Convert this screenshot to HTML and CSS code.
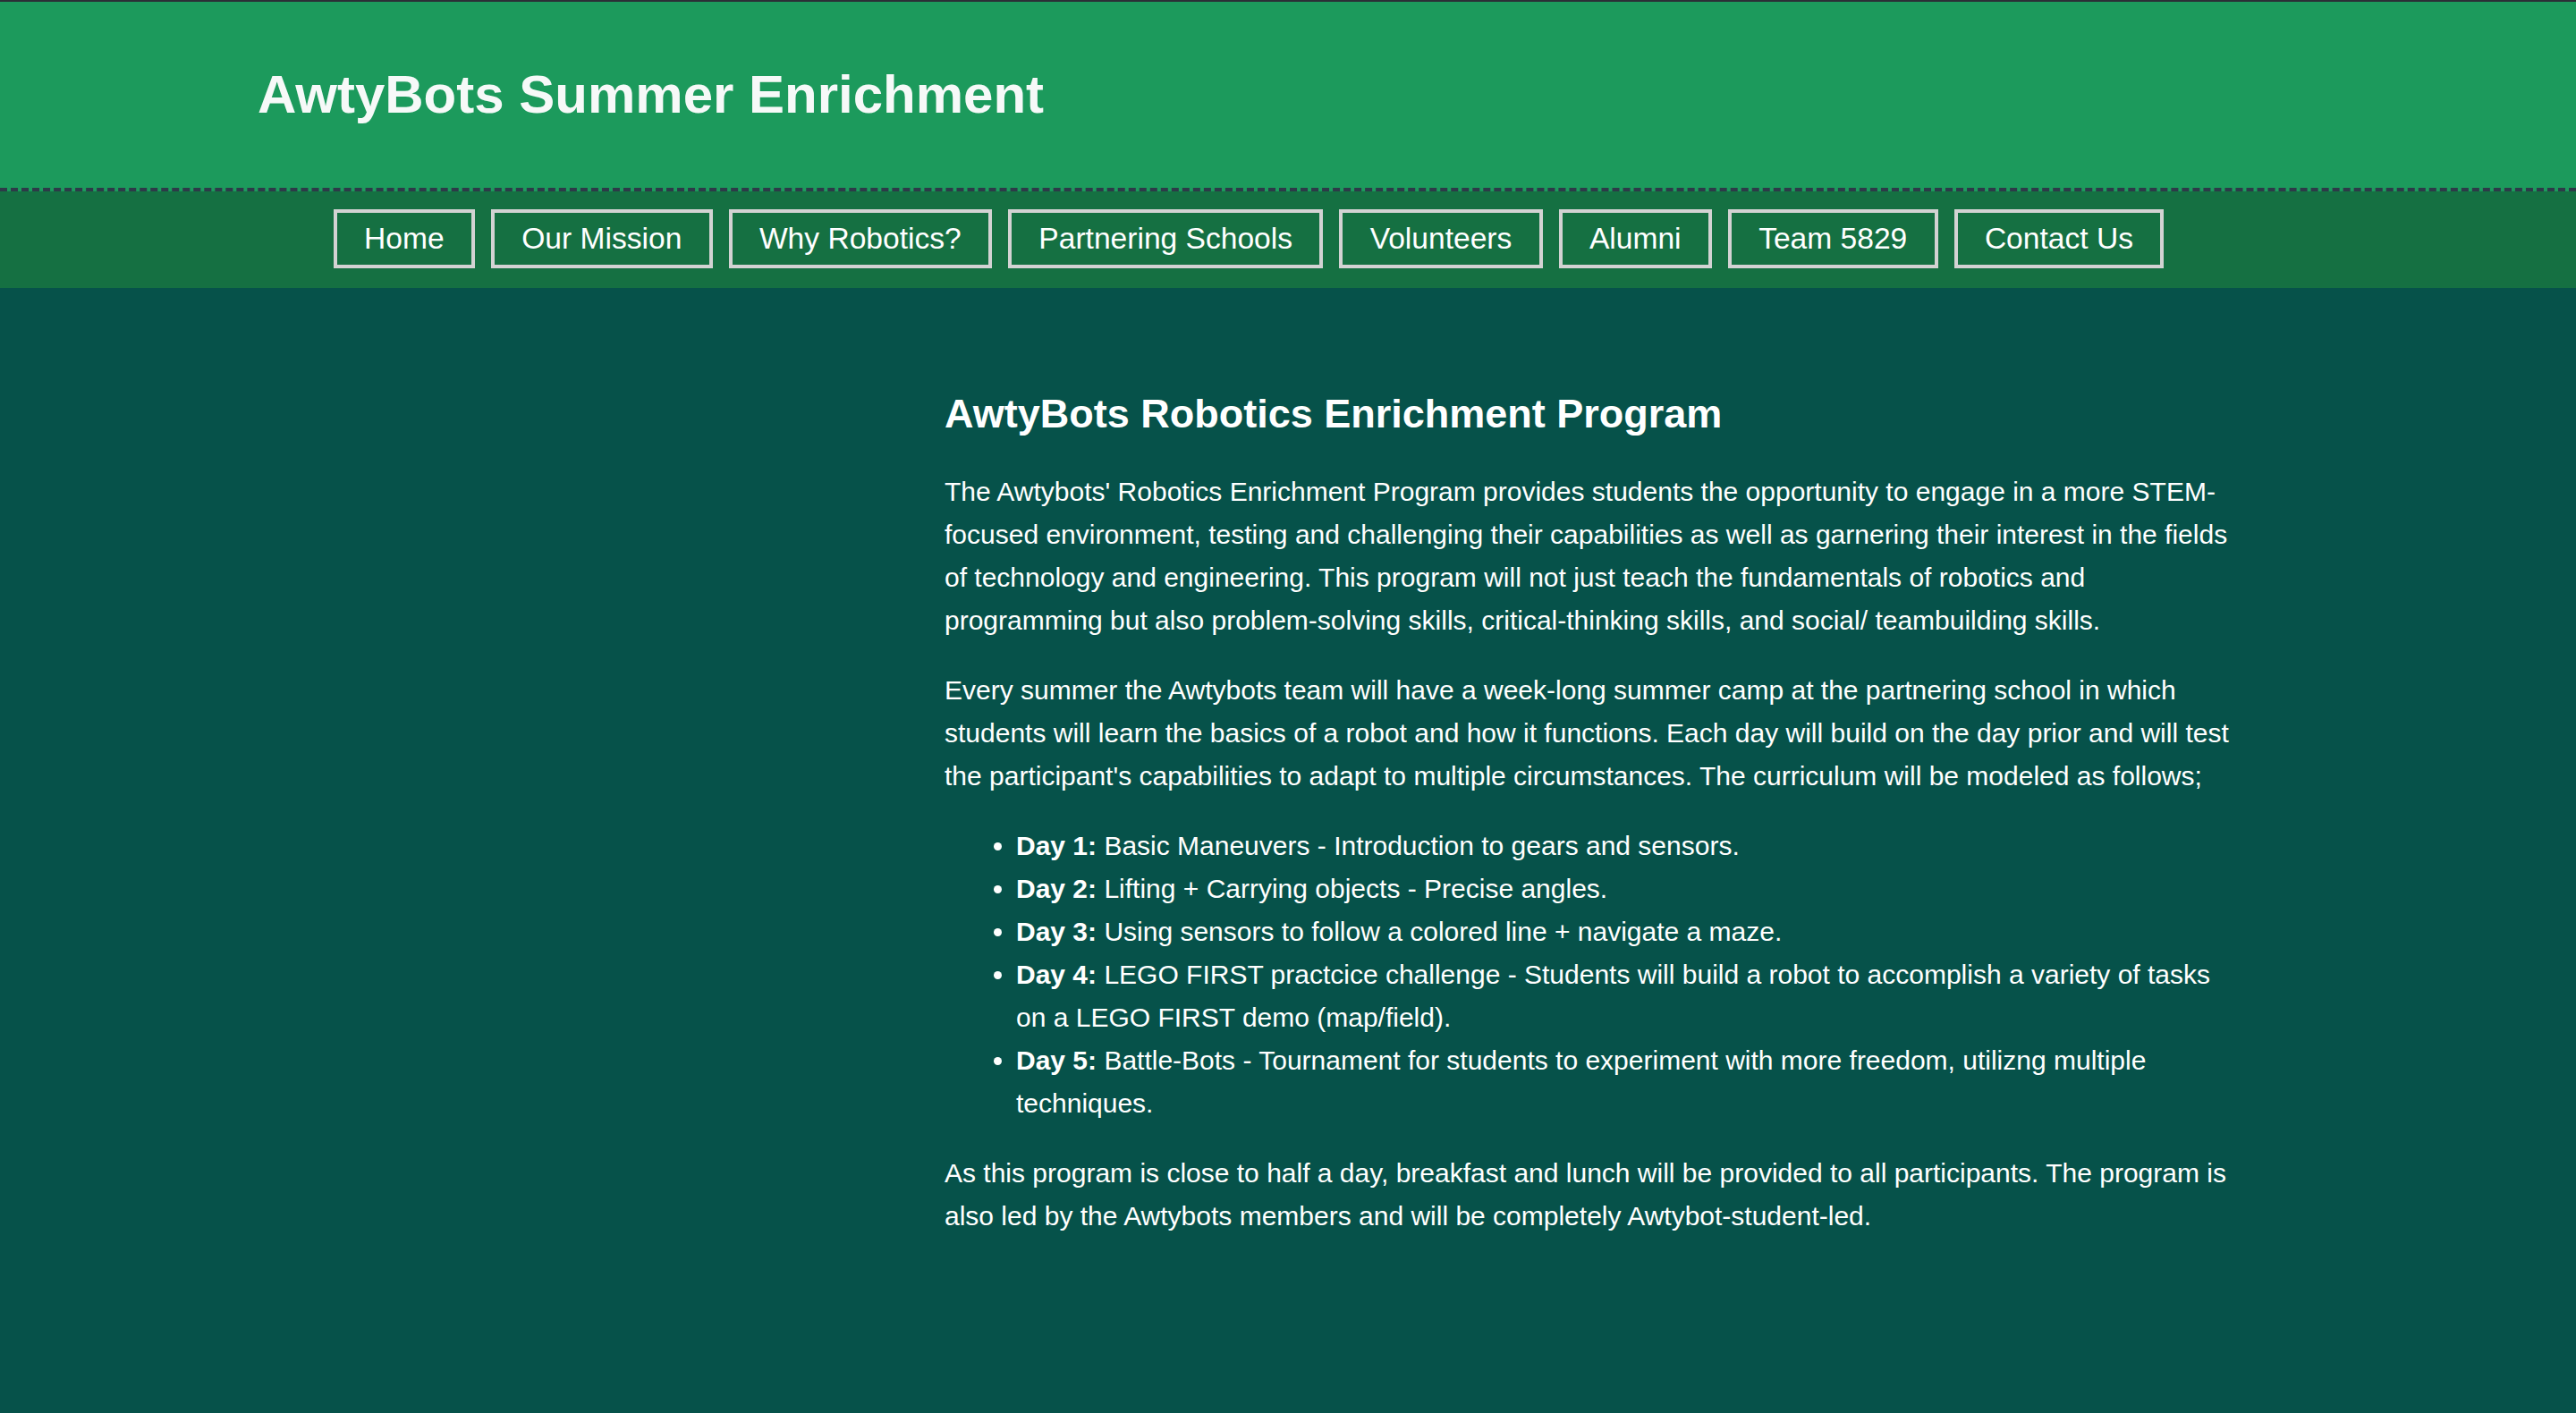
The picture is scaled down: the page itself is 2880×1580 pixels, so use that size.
FILE: index.html
```html
<!DOCTYPE html>
<html lang="en">
<head>
<meta charset="utf-8">
<title>AwtyBots Summer Enrichment</title>
<link rel="stylesheet" href="styles.css">
</head>
<body>
<header class="site-header">
  <h1 class="site-title">AwtyBots Summer Enrichment</h1>
</header>
<nav class="site-nav">
  <ul class="nav-list">
    <li><a class="nav-link" href="#">Home</a></li>
    <li><a class="nav-link" href="#">Our Mission</a></li>
    <li><a class="nav-link" href="#">Why Robotics?</a></li>
    <li><a class="nav-link" href="#">Partnering Schools</a></li>
    <li><a class="nav-link" href="#">Volunteers</a></li>
    <li><a class="nav-link" href="#">Alumni</a></li>
    <li><a class="nav-link" href="#">Team 5829</a></li>
    <li><a class="nav-link" href="#">Contact Us</a></li>
  </ul>
</nav>
<main class="page">
  <aside class="sidebar"></aside>
  <article class="content">
    <h2 class="content-title">AwtyBots Robotics Enrichment Program</h2>
    <p class="content-text">The Awtybots' Robotics Enrichment Program provides students the opportunity to engage in a more STEM-focused environment, testing and challenging their capabilities as well as garnering their interest in the fields of technology and engineering. This program will not just teach the fundamentals of robotics and programming but also problem-solving skills, critical-thinking skills, and social/ teambuilding skills.</p>
    <p class="content-text">Every summer the Awtybots team will have a week-long summer camp at the partnering school in which students will learn the basics of a robot and how it functions. Each day will build on the day prior and will test the participant's capabilities to adapt to multiple circumstances. The curriculum will be modeled as follows;</p>
    <ul class="day-list">
      <li><strong>Day 1:</strong> Basic Maneuvers - Introduction to gears and sensors.</li>
      <li><strong>Day 2:</strong> Lifting + Carrying objects - Precise angles.</li>
      <li><strong>Day 3:</strong> Using sensors to follow a colored line + navigate a maze.</li>
      <li><strong>Day 4:</strong> LEGO FIRST practcice challenge - Students will build a robot to accomplish a variety of tasks on a LEGO FIRST demo (map/field).</li>
      <li><strong>Day 5:</strong> Battle-Bots - Tournament for students to experiment with more freedom, utilizng multiple techniques.</li>
    </ul>
    <p class="content-text">As this program is close to half a day, breakfast and lunch will be provided to all participants. The program is also led by the Awtybots members and will be completely Awtybot-student-led.</p>
  </article>
</main>
</body>
</html>
```

FILE: styles.css
```css
html, body {
  margin: 0;
  padding: 0;
}

body {
  font-family: "Liberation Sans", Arial, Helvetica, sans-serif;
  background: #06524a;
  color: #ffffff;
  min-height: 100vh;
  display: flex;
  flex-direction: column;
}

.site-header {
  background: #1c9a5c;
  border-top: 2px solid #2b2f36;
  border-bottom: 4px dashed #2d3a48;
  padding: 69px 0 70px 288px;
}

.site-title {
  margin: 0;
  font-size: 60px;
  font-weight: bold;
  line-height: normal;
  color: #f6f9f8;
}

.site-nav {
  background: #157042;
  padding: 20px 88px 22px 0;
}

.nav-list {
  list-style: none;
  margin: 0;
  padding: 0;
  display: flex;
  justify-content: center;
  gap: 18px;
}

.nav-link {
  display: block;
  border: 4px solid #d3d3d3;
  padding: 10px 30.3px;
  font-size: 33.6px;
  line-height: normal;
  color: #ffffff;
  text-decoration: none;
}

.page {
  flex: 1;
  display: grid;
  grid-template-columns: 768px 1440px;
  padding: 78px 0 0 288px;
  background: #06524a;
}

.content-title {
  font-size: 45px;
  font-weight: bold;
  line-height: normal;
  margin: 37px 0;
}

.content-text {
  font-size: 30px;
  line-height: 1.6;
  margin: 30px 0;
}

.day-list {
  font-size: 30px;
  line-height: 1.6;
  margin: 30px 0;
  padding-left: 80px;
}
```
